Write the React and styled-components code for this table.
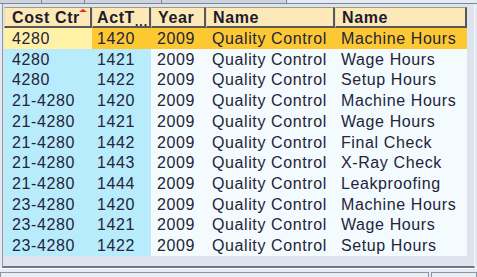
import React from 'react'
import styled, { createGlobalStyle } from 'styled-components'

const GlobalStyle = createGlobalStyle`
  html, body {
    margin: 0;
    padding: 0;
    background: #e4eaf2;
  }
  body {
    width: 477px;
    height: 277px;
    overflow: hidden;
    font-family: "Liberation Sans", Arial, sans-serif;
  }
`

const rows = [
  ['4280', '1420', '2009', 'Quality Control', 'Machine Hours'],
  ['4280', '1421', '2009', 'Quality Control', 'Wage Hours'],
  ['4280', '1422', '2009', 'Quality Control', 'Setup Hours'],
  ['21-4280', '1420', '2009', 'Quality Control', 'Machine Hours'],
  ['21-4280', '1421', '2009', 'Quality Control', 'Wage Hours'],
  ['21-4280', '1442', '2009', 'Quality Control', 'Final Check'],
  ['21-4280', '1443', '2009', 'Quality Control', 'X-Ray Check'],
  ['21-4280', '1444', '2009', 'Quality Control', 'Leakproofing'],
  ['23-4280', '1420', '2009', 'Quality Control', 'Machine Hours'],
  ['23-4280', '1421', '2009', 'Quality Control', 'Wage Hours'],
  ['23-4280', '1422', '2009', 'Quality Control', 'Setup Hours'],
]

const rowHeights = [21, 21, 20, 21, 21, 21, 20, 21, 21, 20, 21]
const widths = [88, 59, 55, 129, 132]
const pads = [8, 5, 6, 6, 6]

const Page = styled.div`
  width: 477px;
  height: 277px;
  display: flex;
  flex-direction: column;
  background: #e4eaf2;
`

const Toolbar = styled.div`
  height: 3px;
  display: flex;
  border-bottom: 1px solid #7d8795;
`

const ToolButton = styled.div`
  width: ${p => p.$w}px;
  border-right: 1px solid #7d8795;
  background: #cdd4de;
`

const Panel = styled.div`
  margin: 0 2px 0 2px;
  height: 264px;
  box-sizing: border-box;
  padding: 3px 0 0 1px;
  border-left: 1px solid #8e97a4;
  border-right: 1px solid #f4f7fb;
  border-bottom: 2px solid #6f7886;
  background: #dde4ee;
`

const Grid = styled.div`
  width: 463px;
  display: flex;
  flex-direction: column;
`

const Row = styled.div`
  display: flex;
  height: ${p => p.$h}px;
`

const HeadCell = styled.div`
  position: relative;
  box-sizing: border-box;
  width: ${p => p.$w}px;
  background: #fde8b8;
  border-top: 1px solid #a39a86;
  border-left: 1px solid #efdcae;
  border-right: 2px solid #585858;
  border-bottom: 2px solid #585858;
  padding: 1px 0 0 ${p => p.$pad}px;
  font-weight: bold;
  font-size: 16px;
  letter-spacing: 0.6px;
  line-height: 17px;
  color: #1c1c2c;
  white-space: nowrap;
  overflow: hidden;
`

const Dots = styled.span`
  font-size: 12px;
  letter-spacing: 1px;
  vertical-align: -3px;
`

const SortMark = styled.span`
  position: absolute;
  top: 1px;
  right: 3px;
  width: 0;
  height: 0;
  border-left: 4px solid transparent;
  border-right: 4px solid transparent;
  border-bottom: 3px solid #e8202a;
`

const Cell = styled.div`
  box-sizing: border-box;
  width: ${p => p.$w}px;
  padding-left: ${p => p.$pad}px;
  font-size: 16px;
  letter-spacing: 0.6px;
  line-height: ${p => p.$h}px;
  color: #24243a;
  white-space: nowrap;
  overflow: hidden;
  background: ${p => p.$bg};
`

const BottomBar = styled.div`
  flex: 1;
  display: flex;
  gap: 2px;
  padding-top: 3px;
  border-top: 1px solid #ffffff;
`

const BottomButton = styled.div`
  width: ${p => p.$w}px;
  border: 1px solid #8a94a3;
  border-bottom: none;
  background: #e9eef4;
`

function cellBg(r, c) {
  if (r === 0) return c === 0 ? '#fff2a6' : '#fdc933'
  return c < 2 ? '#b8ebfb' : '#f3fbfe'
}

const App = () => {
  return (
    <Page>
      <GlobalStyle />
      <Toolbar>
        <ToolButton $w={41} />
        <ToolButton $w={42} />
        <ToolButton $w={76} />
        <ToolButton $w={124} />
      </Toolbar>
      <Panel>
        <Grid>
          <Row $h={21}>
            <HeadCell $w={widths[0]} $pad={7}>Cost Ctr<SortMark /></HeadCell>
            <HeadCell $w={widths[1]} $pad={4}>ActT<Dots>...</Dots></HeadCell>
            <HeadCell $w={widths[2]} $pad={6}>Year</HeadCell>
            <HeadCell $w={widths[3]} $pad={6}>Name</HeadCell>
            <HeadCell $w={widths[4]} $pad={6}>Name</HeadCell>
          </Row>
          {rows.map((row, r) => (
            <Row key={r} $h={rowHeights[r]}>
              {row.map((v, c) => (
                <Cell
                  key={c}
                  $w={widths[c]}
                  $h={rowHeights[r]}
                  $pad={pads[c]}
                  $bg={cellBg(r, c)}
                >
                  {v}
                </Cell>
              ))}
            </Row>
          ))}
        </Grid>
      </Panel>
      <BottomBar>
        <BottomButton $w={431} />
        <BottomButton $w={44} />
      </BottomBar>
    </Page>
  )
}

export default App
